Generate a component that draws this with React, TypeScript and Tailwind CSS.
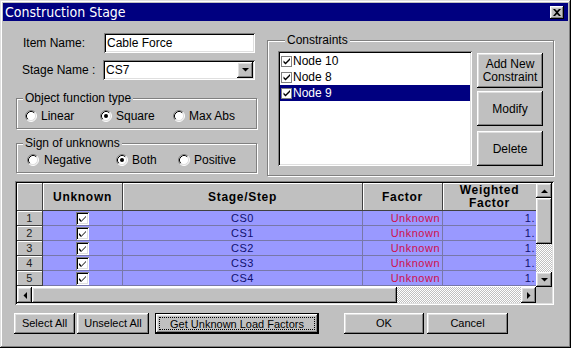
import React from "react";

const raised =
  "bg-[#c0c0c0] shadow-[inset_-1px_-1px_#000,inset_1px_1px_#fff,inset_-2px_-2px_#808080,inset_2px_2px_#dfdfdf]";
const sunken =
  "shadow-[inset_1px_1px_#808080,inset_-1px_-1px_#fff,inset_2px_2px_#000,inset_-2px_-2px_#dfdfdf]";
const etched =
  "border border-[#808080] shadow-[1px_1px_0_#fff,inset_1px_1px_0_#fff]";
const dither =
  "bg-[image:repeating-conic-gradient(#c0c0c0_0_25%,#ffffff_0_50%)] bg-[length:2px_2px]";

function Radio({ checked }: { checked?: boolean }) {
  return (
    <svg width="12" height="12" viewBox="0 0 12 12" className="shrink-0">
      <circle cx="6" cy="6" r="5" fill="#fff" />
      <path d="M2.11 9.89 A5.5 5.5 0 0 1 9.89 2.11" stroke="#808080" fill="none" />
      <path d="M9.89 2.11 A5.5 5.5 0 0 1 2.11 9.89" stroke="#fff" fill="none" />
      <path d="M2.82 9.18 A4.5 4.5 0 0 1 9.18 2.82" stroke="#000" fill="none" />
      <path d="M9.18 2.82 A4.5 4.5 0 0 1 2.82 9.18" stroke="#dfdfdf" fill="none" />
      {checked && <circle cx="6" cy="6" r="2" fill="#000" />}
    </svg>
  );
}

function Check({ size = 13 }: { size?: number }) {
  return (
    <span
      className={`inline-flex items-center justify-center bg-white ${sunken}`}
      style={{ width: size, height: size }}
    >
      <svg width="9" height="9" viewBox="0 0 9 9">
        <path d="M1 4 L3 6 L3 7 L8 2 L8 3 L3 8 L1 6 Z" fill="#000" />
      </svg>
    </span>
  );
}

function SmallCheck() {
  return (
    <span className="inline-flex w-[11px] h-[11px] items-center justify-center bg-white border border-[#808080]">
      <svg width="8" height="8" viewBox="0 0 8 8">
        <path d="M0.5 3.5 L2.5 5.5 L7 1 L7 3 L2.5 7.5 L0.5 5.5 Z" fill="#000" />
      </svg>
    </span>
  );
}

function Arrow({ dir }: { dir: "up" | "down" | "left" | "right" }) {
  const pts = {
    up: "0,4 7,4 3.5,0.5",
    down: "0,0 7,0 3.5,3.5",
    left: "4,0 4,7 0.5,3.5",
    right: "0,0 0,7 3.5,3.5",
  }[dir];
  const vertical = dir === "up" || dir === "down";
  return (
    <svg width={vertical ? 7 : 4} height={vertical ? 4 : 7} viewBox={vertical ? "0 0 7 4" : "0 0 4 7"}>
      <polygon points={pts} fill="#000" />
    </svg>
  );
}

const rows = ["CS0", "CS1", "CS2", "CS3", "CS4"];

export default function App() {
  return (
    <div className="w-[571px] h-[348px] bg-[#c0c0c0] p-[3px] shadow-[inset_-1px_-1px_#000,inset_1px_1px_#dfdfdf,inset_-2px_-2px_#808080,inset_2px_2px_#fff] font-['Liberation_Sans',Arial,sans-serif] text-[12px] text-black overflow-hidden">
      {/* title bar */}
      <div className="h-[18px] bg-[#000080] flex items-center justify-between pl-[2px] pr-[4px]">
        <span className="text-white text-[14px] leading-none font-['Liberation_Sans_Narrow','DejaVu_Sans_Condensed',sans-serif]">
          Construction Stage
        </span>
        <span className={`w-[14px] h-[13px] flex items-center justify-center ${raised}`}>
          <svg width="8" height="7" viewBox="0 0 8 7">
            <path d="M0 0 L2 0 L4 2 L6 0 L8 0 L5 3.5 L8 7 L6 7 L4 5 L2 7 L0 7 L3 3.5 Z" fill="#000" />
          </svg>
        </span>
      </div>

      <div className="pl-[12px]">
        <div className="flex items-start pt-[12px]">
          {/* left column */}
          <div className="ml-[1px] w-[241px]">
            <div className="flex items-center h-[20px]">
              <span className="w-[88px] pl-[7px]">Item Name:</span>
              <div className={`w-[151px] h-[20px] bg-white pl-[3px] flex items-center ${sunken}`}>Cable Force</div>
            </div>
            <div className="flex items-center h-[20px] mt-[7px]">
              <span className="w-[87px] pl-[6px]">Stage Name :</span>
              <div className={`w-[152px] h-[20px] bg-white pl-[3px] pr-[2px] flex items-center justify-between ${sunken}`}>
                <span>CS7</span>
                <span className={`w-[16px] h-[16px] flex items-center justify-center ${raised}`}>
                  <Arrow dir="down" />
                </span>
              </div>
            </div>

            <fieldset className={`mt-[11px] h-[38px] ${etched}`}>
              <legend className="ml-[6px] px-[2px] bg-[#c0c0c0] leading-[14px]">Object function type</legend>
              <div className="flex items-center h-[14px] mt-[4px] pl-[8px]">
                <label className="w-[75px] flex items-center gap-[4px]"><Radio />Linear</label>
                <label className="w-[73px] flex items-center gap-[4px]"><Radio checked />Square</label>
                <label className="flex items-center gap-[4px]"><Radio />Max Abs</label>
              </div>
            </fieldset>

            <fieldset className={`mt-[7px] h-[37px] ${etched}`}>
              <legend className="ml-[6px] px-[2px] bg-[#c0c0c0] leading-[14px]">Sign of unknowns</legend>
              <div className="flex items-center h-[14px] mt-[3px] pl-[10px]">
                <label className="w-[89px] flex items-center gap-[5px]"><Radio />Negative</label>
                <label className="w-[62px] flex items-center gap-[4px]"><Radio checked />Both</label>
                <label className="flex items-center gap-[4px]"><Radio />Positive</label>
              </div>
            </fieldset>
          </div>

          {/* constraints */}
          <fieldset className={`ml-[10px] w-[287px] h-[143px] pl-[10px] ${etched}`}>
            <legend className="ml-[7px] px-[2px] bg-[#c0c0c0] leading-[14px]">Constraints</legend>
            <div className="flex items-start mt-[4px]">
              <div className={`w-[194px] h-[115px] bg-white p-[2px] ${sunken}`}>
                {["Node 10", "Node 8", "Node 9"].map((n, i) => (
                  <div
                    key={n}
                    className={`h-[16px] flex items-center gap-[1px] pl-[1px] ${i === 2 ? "bg-[#000080] text-white" : ""}`}
                  >
                    <SmallCheck />
                    <span>{n}</span>
                  </div>
                ))}
              </div>
              <div className="ml-[5px] flex flex-col">
                <button className={`mt-[2px] w-[66px] h-[35px] leading-[13px] ${raised}`}>
                  Add New
                  <br />
                  Constraint
                </button>
                <button className={`mt-[3px] w-[66px] h-[35px] ${raised}`}>Modify</button>
                <button className={`mt-[5px] w-[66px] h-[35px] ${raised}`}>Delete</button>
              </div>
            </div>
          </fieldset>
        </div>

        {/* grid */}
        <div className={`mt-[5px] w-[539px] h-[124px] p-[2px] ${sunken}`}>
          <div className="flex">
            <div className="w-[519px] h-[104px] bg-white overflow-hidden">
              <div className="flex h-[28px] font-bold tracking-[0.7px] bg-[#c0c0c0]">
                <div className="w-[26px] border-r border-b border-[#404040] shadow-[inset_1px_1px_#fff]" />
                <div className="w-[80px] flex items-center justify-center border-r border-b border-[#404040] shadow-[inset_1px_1px_#fff]">Unknown</div>
                <div className="w-[240px] flex items-center justify-center border-r border-b border-[#404040] shadow-[inset_1px_1px_#fff]">Stage/Step</div>
                <div className="w-[80px] flex items-center justify-center border-r border-b border-[#404040] shadow-[inset_1px_1px_#fff]">Factor</div>
                <div className="w-[93px] flex items-center justify-center text-center leading-[13px] border-b border-[#404040] shadow-[inset_1px_1px_#fff]">
                  Weighted
                  <br />
                  Factor
                </div>
              </div>
              {rows.map((r, i) => (
                <div key={r} className="flex h-[15px] text-[11px] tracking-[0.5px]">
                  <div className="w-[26px] bg-[#c0c0c0] flex items-center justify-center border-r border-b border-[#404040] shadow-[inset_1px_1px_#fff] text-[#202020]">
                    {i + 1}
                  </div>
                  <div className="w-[80px] bg-[#9999ff] flex items-center justify-center border-r border-b border-[#7878a8]">
                    <Check />
                  </div>
                  <div className="w-[240px] bg-[#9999ff] flex items-center justify-center border-r border-b border-[#7878a8] text-[#101070]">
                    {r}
                  </div>
                  <div className="w-[80px] bg-[#9999ff] flex items-center justify-end pr-[2px] border-r border-b border-[#7878a8] text-[#d0104c]">
                    Unknown
                  </div>
                  <div className="w-[93px] bg-[#9999ff] flex items-center justify-end pr-[1px] border-b border-[#7878a8] text-[#101070]">
                    1.
                  </div>
                </div>
              ))}
            </div>
            <div className="w-[16px] h-[104px] flex flex-col">
              <div className={`h-[15px] flex items-center justify-center ${raised}`}><Arrow dir="up" /></div>
              <div className={`h-[46px] ${raised}`} />
              <div className={`flex-1 ${dither}`} />
              <div className={`h-[15px] flex items-center justify-center ${raised}`}><Arrow dir="down" /></div>
            </div>
          </div>
          <div className="flex h-[16px]">
            <div className={`w-[15px] flex items-center justify-center ${raised}`}><Arrow dir="left" /></div>
            <div className={`w-[365px] ${raised}`} />
            <div className={`w-[124px] ${dither}`} />
            <div className={`w-[15px] flex items-center justify-center ${raised}`}><Arrow dir="right" /></div>
            <div className="flex-1 bg-[#c0c0c0]" />
          </div>
        </div>

        {/* bottom buttons */}
        <div className="flex mt-[8px] text-[11px] -ml-[1px]">
          <button className={`w-[61px] h-[21px] ${raised}`}>Select All</button>
          <button className={`ml-[2px] w-[72px] h-[21px] ${raised}`}>Unselect All</button>
          <button className={`ml-[6px] w-[164px] h-[21px] border border-black p-[3px] ${raised}`}>
            <span className="block h-full border border-dotted border-black leading-[13px]">Get Unknown Load Factors</span>
          </button>
          <button className={`ml-[25px] w-[80px] h-[21px] ${raised}`}>OK</button>
          <button className={`ml-[3px] w-[81px] h-[21px] ${raised}`}>Cancel</button>
        </div>
      </div>
    </div>
  );
}
